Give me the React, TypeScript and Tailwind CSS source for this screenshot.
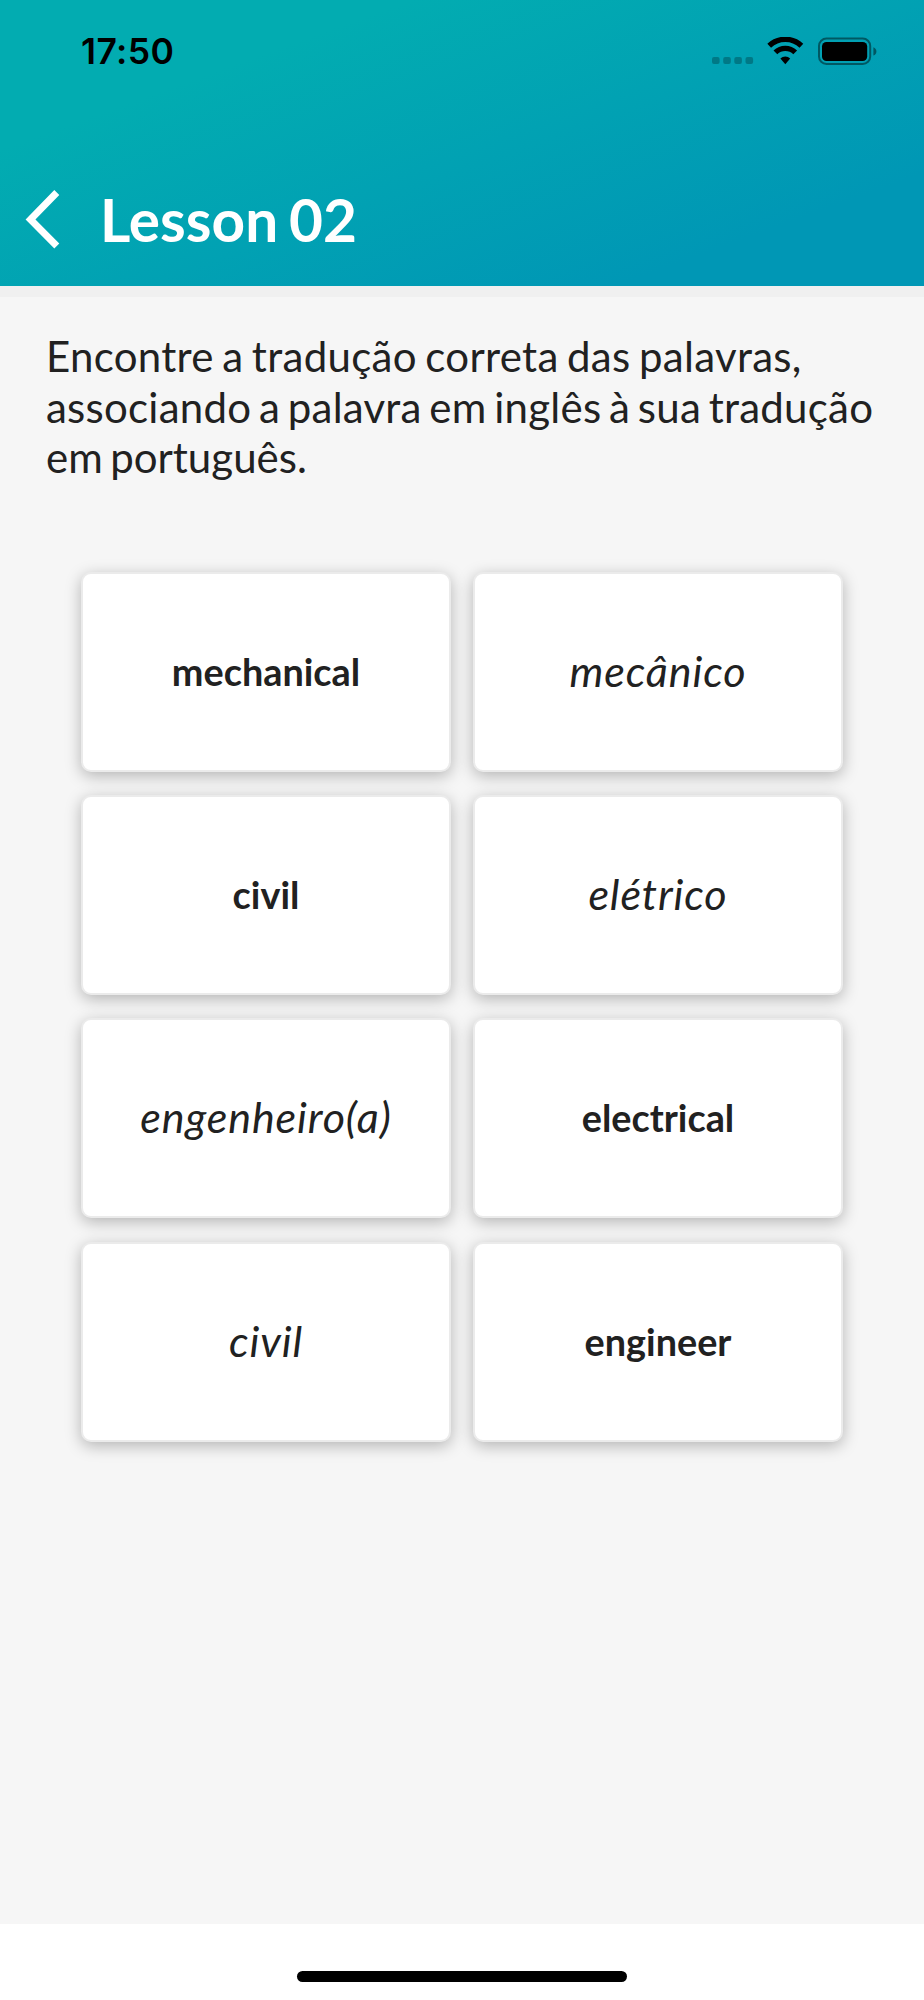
interface WordCard {
  text: string;
  lang: 'en' | 'pt';
}

const cards: WordCard[] = [
  { text: 'mechanical', lang: 'en' },
  { text: 'mecânico', lang: 'pt' },
  { text: 'civil', lang: 'en' },
  { text: 'elétrico', lang: 'pt' },
  { text: 'engenheiro(a)', lang: 'pt' },
  { text: 'electrical', lang: 'en' },
  { text: 'civil', lang: 'pt' },
  { text: 'engineer', lang: 'en' },
];

function StatusBar() {
  return (
    <div className="flex h-[100px] items-center justify-between pl-[81px] pr-[47px]">
      <span className="pt-[3px] font-['Inter',sans-serif] text-[35.5px] font-semibold leading-none tracking-[0.4px] text-black">
        17:50
      </span>
      <svg className="mt-px" width="165" height="28" viewBox="0 0 165 28">
        {[0, 11.2, 22.3, 33.5].map((x) => (
          <rect key={x} x={x} y="20" width="7.6" height="7" rx="2" fillOpacity="0.25" />
        ))}
        <g fill="none" stroke="black" strokeWidth="5.4">
          <path d="M57.2 8.7 A23.5 23.5 0 0 1 89.4 8.7" />
          <path d="M63.4 15.4 A14.2 14.2 0 0 1 83.2 15.4" />
        </g>
        <path d="M73.3 27.2 L68.4 21.6 A7 7 0 0 1 78.2 21.6 Z" />
        <rect x="107" y="1.6" width="51.2" height="25.4" rx="7.5" fill="none" stroke="black" strokeOpacity="0.45" strokeWidth="2" />
        <rect x="110" y="5" width="45.2" height="19" rx="4.5" />
        <path d="M161.4 10.2 Q164.4 11.4 164.4 14.4 Q164.4 17.4 161.4 18.6 Z" fillOpacity="0.45" />
      </svg>
    </div>
  );
}

function Header() {
  return (
    <header className="h-[286px] bg-linear-[160deg] from-[#02acb1] from-24% to-[#0097b5] to-82%">
      <StatusBar />
      <div className="flex items-center pl-[25px] pt-[89px]">
        <svg width="36" height="60" viewBox="0 0 36 60" fill="none" stroke="white" strokeWidth="7">
          <path d="M31.8 3.5 L5.5 30.5 L31.8 57" />
        </svg>
        <h1 className="ml-[39px] text-[58.5px] font-bold leading-[60px] text-white [word-spacing:-3.4px]">
          Lesson 02
        </h1>
      </div>
    </header>
  );
}

function Card({ text, lang }: WordCard) {
  return (
    <button className="flex h-[200px] items-center justify-center rounded-[10px] border-2 border-[#ebebeb] bg-white shadow-[0_4px_16px_rgba(0,0,0,0.27)]">
      {lang === 'en' ? (
        <span className="text-[37.8px] font-bold leading-none">{text}</span>
      ) : (
        <span className="pb-[3px] text-[43px] italic leading-none tracking-[0.9px]">{text}</span>
      )}
    </button>
  );
}

export default function App() {
  return (
    <div className="flex h-[2000px] w-[924px] flex-col bg-[#f6f6f6] font-['Lato',sans-serif] text-[#212121]">
      <Header />
      <div className="h-[11px] bg-[#f0f0f0]" />
      <main className="flex-1">
        <p className="pl-[46px] pt-[34px] text-[42px] leading-[50.6px] [word-spacing:-3.3px]">
          <span className="tracking-[0.3px] [word-spacing:-2.6px]">Encontre a tradução correta das palavras,</span>
          <br />
          <span className="tracking-[0.24px]">associando a palavra em inglês à sua tradução</span>
          <br />
          em português.
        </p>
        <div className="mx-[81px] mt-[89px] grid grid-cols-2 gap-x-[22px] gap-y-[23.3px]">
          {cards.map((card) => (
            <Card key={card.lang + card.text} {...card} />
          ))}
        </div>
      </main>
      <footer className="flex h-[76px] justify-center bg-white pt-[47px]">
        <div className="h-[11px] w-[330px] rounded-full bg-black" />
      </footer>
    </div>
  );
}
